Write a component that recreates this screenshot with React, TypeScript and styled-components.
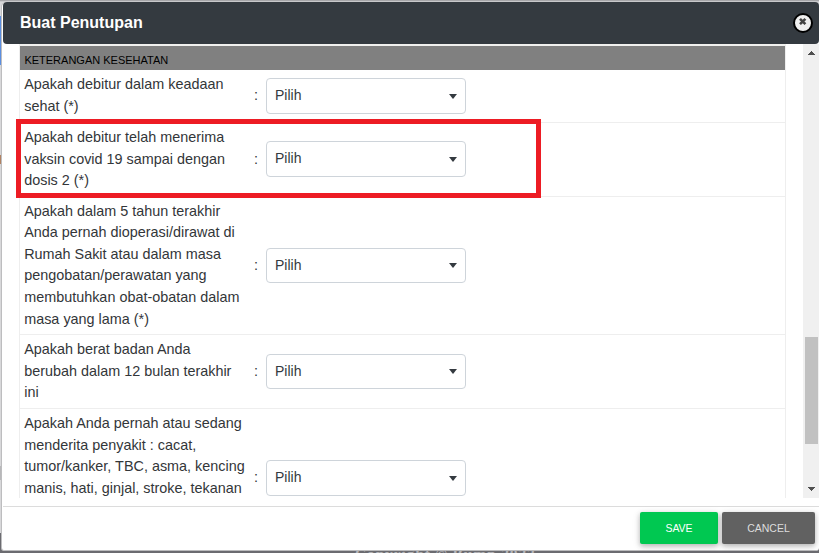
import React from "react";
import styled, { createGlobalStyle } from "styled-components";

const GlobalStyle = createGlobalStyle`
  * { box-sizing: border-box; }
  body {
    margin: 0;
    overflow: hidden;
    font-family: "Liberation Sans", Arial, sans-serif;
    color: #333639;
  }
`;

const Page = styled.div`
  position: relative;
  width: 819px;
  height: 553px;
  padding: 2px 0 0 2px;
  overflow: hidden;
  background: linear-gradient(#a6a6a9 0 1px, #c8c8cb 1px 2px, #d8d8da 2px 533px, #6b6b70 533px);
`;

const EdgeMark = styled.span<{ $top: number; $height: number; $color: string }>`
  position: absolute;
  left: 0;
  top: ${(p) => p.$top}px;
  width: 1px;
  height: ${(p) => p.$height}px;
  background: ${(p) => p.$color};
`;

const Copyright = styled.div`
  position: absolute;
  left: 355px;
  top: 546px;
  font: bold 15.5px/16px "Liberation Serif", serif;
  letter-spacing: 0.85px;
  white-space: nowrap;
  color: #b4b4b8;
`;

const Dialog = styled.section`
  position: relative;
  display: flex;
  flex-direction: column;
  width: 817px;
  height: 549px;
  padding-left: 1px;
  border-bottom: 1px solid #bcbcbe;
  border-radius: 5px 5px 3px 3px;
  background: #fff;
  box-shadow: -1px 0 0 #bdbdbf;
`;

const Header = styled.header`
  display: flex;
  flex: none;
  align-items: center;
  justify-content: space-between;
  height: 42px;
  padding: 0 6px 0 17px;
  border-radius: 4px;
  background: #343a40;
`;

const Title = styled.h1`
  margin: 0;
  font-size: 16px;
  line-height: 24px;
  color: #fff;
`;

const CloseButton = styled.button`
  display: block;
  width: 20px;
  height: 20px;
  padding: 0;
  border: 0;
  background: none;
  svg { display: block; }
`;

const Body = styled.div`
  display: flex;
  flex: none;
  justify-content: space-between;
  height: 454px;
  overflow: hidden;
`;

const Form = styled.div`
  width: 767px;
  height: 500px;
  margin-left: 16px;
  border: 1px solid #eee;
  border-top: 2px solid #f1f1ef;
`;

const SectionTitle = styled.h2`
  height: 24px;
  margin: 0;
  padding: 2px 4px 0 4.4px;
  background: #808080;
  color: #000;
  font-size: 11px;
  font-weight: 400;
  line-height: 24px;
`;

const Row = styled.div<{ $height: number }>`
  display: grid;
  grid-template-columns: 242px 200px;
  align-items: center;
  column-gap: 4px;
  height: ${(p) => p.$height}px;
  border-bottom: 1px solid #eee;
`;

const Question = styled.div`
  display: flex;
  align-items: center;
  justify-content: space-between;
  padding-left: 4.2px;
  padding-right: 4px;
  font-size: 14.4px;
  line-height: 21.6px;
`;

const QuestionText = styled.span<{ $lines: number }>`
  min-height: ${(p) => p.$lines * 21.6}px;
  white-space: pre;
`;

const Select = styled.button<{ $height: number; $gap: number }>`
  display: flex;
  align-items: center;
  justify-content: space-between;
  width: 200px;
  height: ${(p) => p.$height}px;
  margin-bottom: ${(p) => p.$gap}px;
  padding: 0 8px;
  border: 1px solid #ced4da;
  border-radius: 4px;
  background: #fff;
  color: #343a40;
  font: 14px/20px "Liberation Sans", Arial, sans-serif;
`;

const SelectValue = styled.span<{ $height: number }>`
  margin-bottom: ${(p) => (p.$height === 35 ? 1 : 2)}px;
`;

const Scrollbar = styled.div`
  display: flex;
  flex-direction: column;
  align-items: center;
  width: 17px;
  margin-right: -1px;
  padding: 7px 0 7px;
  background: #f0f0f0;
`;

const Thumb = styled.div`
  width: 13px;
  height: 107px;
  margin: 282px 0 auto;
  background: #c1c1c1;
`;

const Footer = styled.footer`
  display: flex;
  gap: 4px;
  justify-content: flex-end;
  margin-top: 8px;
  padding: 5px 4px 0 0;
  border-top: 1px solid #dcdcdc;
`;

const Action = styled.button<{ $width: number; $bg: string; $fg: string }>`
  width: ${(p) => p.$width}px;
  height: 32px;
  padding: 0;
  border: 0;
  border-radius: 2px;
  background: ${(p) => p.$bg};
  color: ${(p) => p.$fg};
  box-shadow: 0 2px 5px rgba(0, 0, 0, 0.22), 0 2px 8px rgba(0, 0, 0, 0.12);
  font: 10.5px/16px "Liberation Sans", Arial, sans-serif;
`;

const Highlight = styled.div`
  position: absolute;
  left: 16px;
  top: 119px;
  width: 525px;
  height: 79px;
  border: 5px solid #ed1c24;
`;

const questions = [
  { height: 53, lines: 2, select: 36, gap: 0, text: "Apakah debitur dalam keadaan\nsehat (*)" },
  { height: 74, lines: 3, select: 36, gap: 0.6, text: "Apakah debitur telah menerima\nvaksin covid 19 sampai dengan\ndosis 2 (*)" },
  {
    height: 138,
    lines: 6,
    select: 35,
    gap: 0,
    text: "Apakah dalam 5 tahun terakhir\nAnda pernah dioperasi/dirawat di\nRumah Sakit atau dalam masa\npengobatan/perawatan yang\nmembutuhkan obat-obatan dalam\nmasa yang lama (*)",
  },
  { height: 74, lines: 3, select: 35, gap: 0, text: "Apakah berat badan Anda\nberubah dalam 12 bulan terakhir\nini" },
  {
    height: 139,
    lines: 6,
    select: 36,
    gap: 0,
    text: "Apakah Anda pernah atau sedang\nmenderita penyakit : cacat,\ntumor/kanker, TBC, asma, kencing\nmanis, hati, ginjal, stroke, tekanan",
  },
];

function ScrollArrow({ up = false }: { up?: boolean }) {
  return (
    <svg width="7" height="4" viewBox="0 0 7 4" shapeRendering="crispEdges">
      <path
        d={up ? "M3 0H4V1H5V2H6V3H7V4H0V3H1V2H2V1H3Z" : "M0 0H7V1H6V2H5V3H4V4H3V3H2V2H1V1H0Z"}
        fill="#505050"
      />
    </svg>
  );
}

export default function App() {
  return (
    <>
      <GlobalStyle />
      <Page>
        <EdgeMark $top={16} $height={49} $color="#5b8ee0" />
        <EdgeMark $top={155} $height={9} $color="#b18262" />
        <EdgeMark $top={466} $height={14} $color="#b8b8ba" />
        <Copyright>Copyright © Bumn 2022</Copyright>
        <Dialog>
          <Header>
            <Title>Buat Penutupan</Title>
            <CloseButton aria-label="Tutup">
              <svg width="20" height="20" viewBox="0 0 20 20">
                <circle cx="10" cy="10" r="9" fill="#f0f0f0" stroke="#000" strokeWidth="2" />
                <path d="M7 5.8L12.4 11.2M12.4 5.8L7 11.2" stroke="#444" strokeWidth="2.6" />
              </svg>
            </CloseButton>
          </Header>
          <Body>
            <Form>
              <SectionTitle>KETERANGAN KESEHATAN</SectionTitle>
              {questions.map((q) => (
                <Row key={q.text} $height={q.height}>
                  <Question>
                    <QuestionText $lines={q.lines}>{q.text}</QuestionText>
                    <span>:</span>
                  </Question>
                  <Select $height={q.select} $gap={q.gap}>
                    <SelectValue $height={q.select}>Pilih</SelectValue>
                    <svg width="8" height="5" viewBox="0 0 8 5">
                      <path d="M0 0H8L4 5Z" fill="#343a40" />
                    </svg>
                  </Select>
                </Row>
              ))}
            </Form>
            <Scrollbar>
              <ScrollArrow up />
              <Thumb />
              <ScrollArrow />
            </Scrollbar>
          </Body>
          <Footer>
            <Action $width={78} $bg="#00c851" $fg="#fff">SAVE</Action>
            <Action $width={93} $bg="#616161" $fg="#ddd">CANCEL</Action>
          </Footer>
        </Dialog>
        <Highlight />
      </Page>
    </>
  );
}
